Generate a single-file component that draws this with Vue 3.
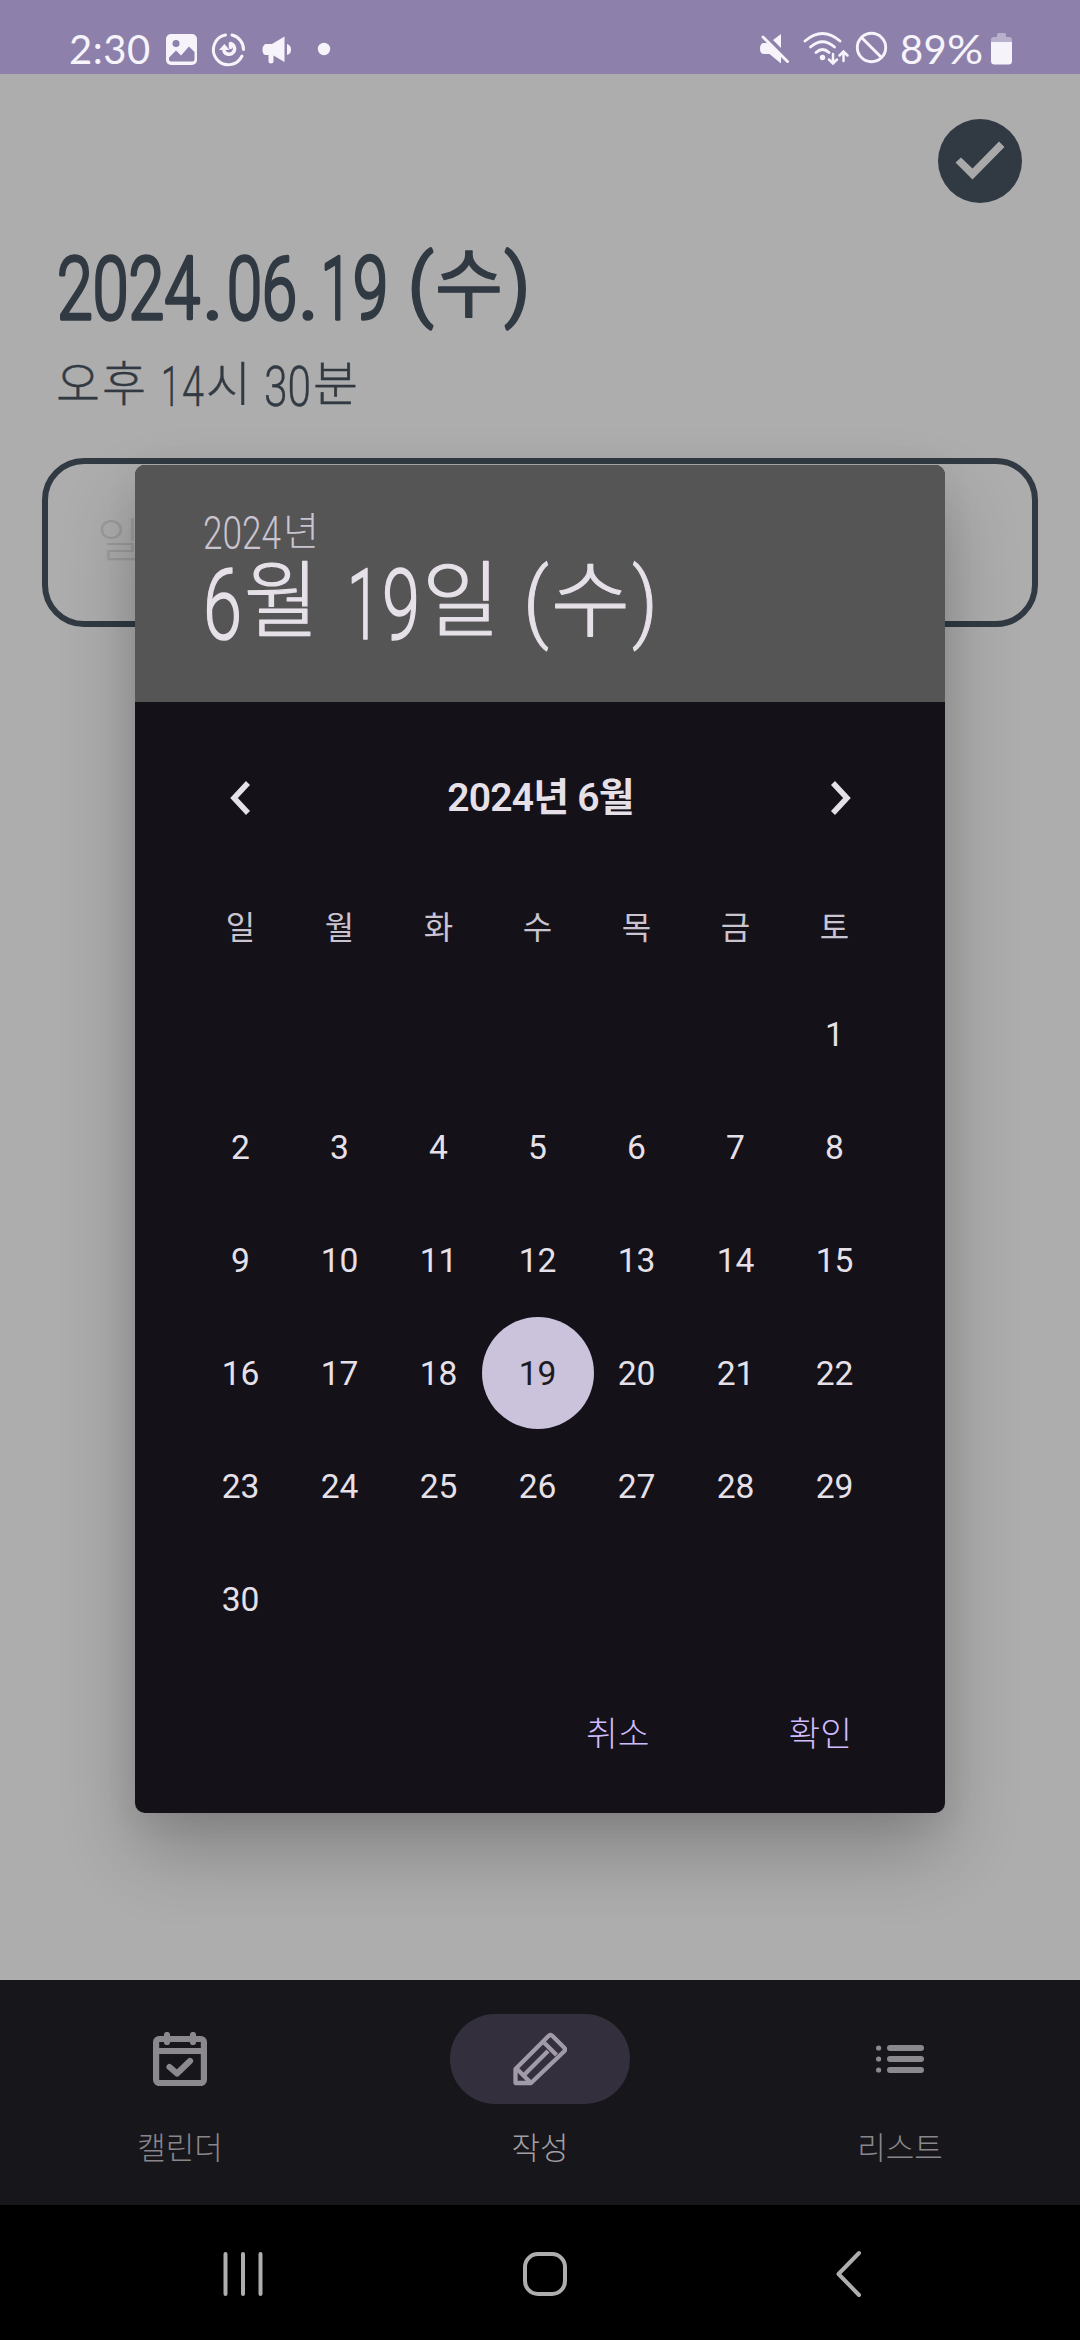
<script setup>
// Display lettering: each run is fitted to its own advance width.
const headline = [
  { t: '2024', x: 57, w: 143, k: 'd' }, { t: '.', x: 202, w: 22, k: 'd' },
  { t: '06', x: 227, w: 70, k: 'd' }, { t: '.', x: 298, w: 21, k: 'd' },
  { t: '1', x: 321, w: 30, k: 'd' }, { t: '9', x: 353, w: 35, k: 'd' },
  { t: '(', x: 408, w: 25, k: 'p' }, { t: '수', x: 435, w: 68, k: 'h' }, { t: ')', x: 505, w: 25, k: 'p' },
]
const clock = [
  { t: '오', x: 56, w: 44, k: 'h' }, { t: '후', x: 102, w: 44, k: 'h' },
  { t: '1', x: 161, w: 19, k: 'd' }, { t: '4', x: 182, w: 22, k: 'd' }, { t: '시', x: 206, w: 45, k: 'h' },
  { t: '30', x: 264, w: 47, k: 'd' }, { t: '분', x: 313, w: 45, k: 'h' },
]
const year = [
  { t: '2024', x: 68, w: 78, k: 'd' }, { t: '년', x: 148, w: 36, k: 'h' },
]
const picked = [
  { t: '6', x: 68, w: 39, k: 'd' }, { t: '월', x: 109, w: 75, k: 'h' },
  { t: '1', x: 212, w: 33, k: 'd' }, { t: '9', x: 247, w: 38, k: 'd' }, { t: '일', x: 287, w: 78, k: 'h' },
  { t: '(', x: 388, w: 26, k: 'p' }, { t: '수', x: 416, w: 79, k: 'h' }, { t: ')', x: 497, w: 26, k: 'p' },
]
const weekdays = ['일', '월', '화', '수', '목', '금', '토']
const cells = [...Array(6).fill(''), ...Array.from({ length: 30 }, (_, i) => i + 1)]
</script>

<template>
  <div class="screen">
    <header class="status">
      <span class="time">2:30</span>
      <svg class="left-icons" width="180" height="74" viewBox="160 0 180 74">
        <rect x="166" y="34" width="31" height="31" rx="5" fill="#f6f4fa" />
        <circle cx="176" cy="43.500" r="3.500" fill="#8d80ab" />
        <path d="M169 57.500l7-7 5 5 8-9 5.500 5.500v7.500q0 2-2 2h-21.500q-2 0-2-2z" fill="#8d80ab" />
        <g fill="none" stroke="#f6f4fa" stroke-width="3" stroke-linecap="round">
          <path d="M225.500 35a15 15 0 1 0 16.500 21" />
          <path d="M232 35a15 15 0 0 1 11.500 14.500" />
          <path d="M230.500 43.500a5.500 5.500 0 1 1-6.500 7.500M230.500 43.500v4" stroke-width="3.500" />
        </g>
        <path d="M219 50l5.500-6 5 6z" fill="#f6f4fa" />
        <path d="M265 44h7l12.500-7.500v25.500l-11-6.500v6q0 2-2.500 2t-2.500-2v-6.500h-3.500q-2.500-1-2.500-5t2.500-6zM287 44q4 1 4 5.500t-4 5.500z" fill="#f6f4fa" />
        <circle cx="324" cy="49" r="6.200" fill="#f6f4fa" />
      </svg>
      <svg class="right-icons" width="140" height="74" viewBox="755 0 140 74">
        <g fill="#f6f4fa">
          <path d="M773 40l8-6v14zM763 43h4.500l13.500 13v7.500l-11.500-9.500h-6.500q-3-1-3-5.500t3-5.500z" />
          <circle cx="822.500" cy="57.500" r="2.700" />
        </g>
        <g fill="none" stroke="#f6f4fa" stroke-width="2.900" stroke-linecap="round">
          <path d="M763 37l24.500 24.500" />
          <path d="M805 41q17.500-15 35 0M810.500 47q12-10.500 24 0M816 52.500q6.500-6 13 0" />
          <path d="M833 54v9M829 59.500l4 4 4-4M843.500 61v-9.500M839.500 55.500l4-4 4 4" stroke-width="2.500" />
          <circle cx="871.500" cy="47.500" r="14.200" />
          <path d="M861.500 37.500l20 20" />
        </g>
      </svg>
      <span class="percent">89<i>%</i></span>
      <svg class="battery" width="21" height="32" viewBox="0 0 21 32">
        <path d="M0 9V7q0-3 3-3h3V2q0-2 2-2h5q2 0 2 2v2h3q3 0 3 3v2z" fill="#b9b0cd" />
        <path d="M0 9h21v19q0 3.500-3.500 3.500h-14Q0 31.500 0 28z" fill="#f6f4fa" />
      </svg>
    </header>

    <main class="content">
      <div class="toolbar">
        <svg width="84" height="84" viewBox="0 0 84 84">
          <circle cx="42" cy="42" r="42" fill="#313a42" />
          <path d="M17.500 43.500l5.500-5 11.500 11L61 22.500l5.500 5.500-32 32.500z" fill="#a9a9a9" />
        </svg>
      </div>
      <svg class="lettering headline" width="600" height="110" viewBox="0 236 600 110">
        <text><tspan v-for="(r, i) in headline" :key="i" :x="r.x" :y="r.k === 'd' ? 319 : r.k === 'h' ? 310.500 : 311" :textLength="r.w" lengthAdjust="spacingAndGlyphs" :class="r.k">{{ r.t }}</tspan></text>
      </svg>
      <svg class="lettering clock" width="600" height="74" viewBox="0 346 600 74">
        <text><tspan v-for="(r, i) in clock" :key="i" :x="r.x" :y="r.k === 'h' ? 400.500 : 406" :textLength="r.w" lengthAdjust="spacingAndGlyphs" :class="r.k">{{ r.t }}</tspan></text>
      </svg>
      <div class="field"><span>일</span></div>
    </main>

    <nav class="tabs">
      <div class="tab">
        <div class="pill">
          <svg width="54" height="54" viewBox="0 0 54 54" fill="none" stroke="#8b888e" stroke-width="6.200">
            <rect x="3.100" y="7" width="47.800" height="44" rx="3" />
            <path d="M3 19h48" />
            <path d="M14 3v7M40 3v7M16.500 35l7.500 6.500L37 29" stroke-linecap="round" stroke-linejoin="round" />
          </svg>
        </div>
        <span>캘린더</span>
      </div>
      <div class="tab">
        <div class="pill active">
          <svg width="54" height="54" viewBox="0 0 54 54" fill="none" stroke="#a19aa8" stroke-width="4.300" stroke-linejoin="round">
            <path d="M2.500 51V37L35.500 4q2-2 4 0L51 15.500q2 2 0 4L18 51z" />
            <path d="M31 10.500L43.500 23M4 37l14 14M12 42l23-23" />
          </svg>
        </div>
        <span class="on">작성</span>
      </div>
      <div class="tab">
        <div class="pill">
          <svg width="48" height="30" viewBox="0 0 48 30" stroke="#8b888e" stroke-width="6" stroke-linecap="round">
            <path d="M14 4h31M14 15h31M14 26h31" />
            <path d="M2.600 4h.01M2.600 15h.01M2.600 26h.01" stroke-width="5.200" />
          </svg>
        </div>
        <span>리스트</span>
      </div>
    </nav>

    <footer class="system">
      <svg width="44" height="48" viewBox="0 0 44 48"><path d="M4.500 4v40M22 4v40M39.500 4v40" /></svg>
      <svg class="home" width="48" height="48" viewBox="0 0 48 48"><rect x="4" y="4" width="40" height="40" rx="13" /></svg>
      <svg width="32" height="50" viewBox="0 0 32 50"><path d="M26 4L5.500 25 26 46" /></svg>
    </footer>

    <section class="dialog">
      <div class="dialog-head">
        <svg class="lettering" width="700" height="237" viewBox="0 0 700 237">
          <text class="year"><tspan v-for="(r, i) in year" :key="i" :x="r.x" :y="r.k === 'h' ? 79.500 : 84" :textLength="r.w" lengthAdjust="spacingAndGlyphs" :class="r.k">{{ r.t }}</tspan></text>
          <text class="picked"><tspan v-for="(r, i) in picked" :key="i" :x="r.x" :y="r.k === 'h' ? 165 : r.k === 'p' ? 165.500 : 174" :textLength="r.w" lengthAdjust="spacingAndGlyphs" :class="r.k">{{ r.t }}</tspan></text>
        </svg>
      </div>
      <div class="month">
        <svg width="22" height="36" viewBox="0 0 22 36"><path d="M19 3L5 18l14 15" /></svg>
        <span>2024년 6월</span>
        <svg width="22" height="36" viewBox="0 0 22 36"><path d="M3 3l14 15L3 33" /></svg>
      </div>
      <div class="grid weekdays"><span v-for="d in weekdays" :key="d">{{ d }}</span></div>
      <div class="grid days">
        <span v-for="(c, i) in cells" :key="i"><b :class="{ selected: c === 19 }">{{ c }}</b></span>
      </div>
      <div class="actions"><span>취소</span><span>확인</span></div>
    </section>
  </div>
</template>

<style>
body { margin: 0; }
</style>

<style scoped>
.screen {
  position: relative;
  width: 1080px;
  height: 2340px;
  display: flex;
  flex-direction: column;
  background: #adadad;
  overflow: hidden;
  font-family: Roboto, "Noto Sans CJK KR", sans-serif;
}
svg { display: block; flex: none; }

.status {
  height: 74px;
  flex: none;
  display: flex;
  background: #8d80ab;
  color: #f6f4fa;
  font-family: Lato, sans-serif;
  font-size: 40px;
  line-height: 98px;
  overflow: hidden;
}
.time { width: 91px; padding-left: 69px; white-space: nowrap; letter-spacing: .5px; }
.right-icons { margin-left: 415px; }
.percent { display: flex; width: 91px; margin-left: 5px; letter-spacing: .3px; }
.percent i { font-style: normal; transform: scaleX(1.13); transform-origin: 0 50%; }
.battery { margin-top: 33px; }

.content { flex: 1; }
.toolbar { display: flex; justify-content: flex-end; padding: 45px 58px 33px 0; }

.lettering { overflow: visible; }
.lettering text { font-family: Roboto, sans-serif; font-weight: 300; stroke-linejoin: round; stroke-linecap: round; }
.lettering .h { font-family: "Noto Sans CJK KR", sans-serif; }
.headline text { fill: #313a42; stroke: #313a42; stroke-width: 3.600px; font-size: 88px; }
.headline .h { font-size: 75px; font-weight: 400; stroke-width: 1.300px; }
.headline .p { font-size: 78px; stroke-width: 3.500px; }
.clock text { fill: #313a42; stroke: #313a42; stroke-width: .4px; font-size: 56px; }
.clock .h { font-size: 48px; }

.field {
  margin: 38px 42px 0;
  height: 169px;
  box-sizing: border-box;
  border: 6px solid #313a42;
  border-radius: 42px;
  padding: 0 0 12px 49px;
  display: flex;
  align-items: center;
  color: #9c9b9c;
  font: 300 47px "Noto Sans CJK KR", sans-serif;
}

.tabs { height: 225px; flex: none; display: flex; background: #17161b; }
.tab {
  flex: 1;
  display: flex;
  flex-direction: column;
  align-items: center;
  padding-top: 34px;
  color: #8a878c;
  font: 300 31px/84px "Noto Sans CJK KR", sans-serif;
}
.pill {
  width: 180px;
  height: 90px;
  border-radius: 45px;
  display: flex;
  align-items: center;
  justify-content: center;
}
.pill.active { background: #332f3c; }
.tab .on { color: #a19fa2; }

.system {
  height: 135px;
  flex: none;
  box-sizing: border-box;
  padding: 3px 215px 0 221px;
  display: flex;
  align-items: center;
  justify-content: space-between;
  background: #000;
}
.system svg { fill: none; stroke: #aeaeae; stroke-width: 4px; stroke-linecap: round; stroke-linejoin: round; }
.system .home { margin-right: 8px; }

.dialog {
  position: absolute;
  left: 135px;
  top: 465px;
  width: 810px;
  height: 1348px;
  border-radius: 10px;
  overflow: hidden;
  background: #141118;
  color: #e6e0e9;
  box-shadow: 0 38px 74px rgba(0, 0, 0, .24), 0 6px 34px rgba(0, 0, 0, .06);
}
.dialog-head { height: 237px; background: #555; }
.year { fill: #cac4d0; font-size: 46px; }
.year .h { font-size: 39px; }
.picked { fill: #e6e0e9; stroke: #e6e0e9; stroke-width: 1.600px; font-size: 99px; }
.picked .h { font-size: 83px; stroke-width: 1.200px; }
.picked .p { font-size: 87px; stroke-width: 1px; }

.month {
  display: flex;
  align-items: center;
  justify-content: space-between;
  height: 92px;
  padding: 50px 93px 0 94px;
  font-size: 39px;
  font-weight: 600;
}
.month span { line-height: 50px; letter-spacing: -.8px; }
.month svg { fill: none; stroke: #e6e0e9; stroke-width: 5.500px; }

.grid { display: grid; grid-template-columns: repeat(7, 99px); margin-left: 56px; text-align: center; }
.weekdays {
  margin-top: 53px;
  height: 57px;
  color: #cac4d0;
  font: 400 32px/57px "Noto Sans CJK KR", sans-serif;
}
.days { grid-auto-rows: 113px; margin-top: 23px; }
.days span { display: flex; align-items: center; justify-content: center; }
.days b {
  flex: none;
  width: 112px;
  height: 112px;
  line-height: 113px;
  border-radius: 50%;
  font-size: 33.600px;
  font-weight: 400;
}
.days b.selected { background: #cbc2db; color: #1d1b20; }

.actions {
  display: flex;
  justify-content: flex-end;
  gap: 139px;
  padding: 46px 93px 0 0;
  color: #d0bcff;
  font: 300 34.500px/60px "Noto Sans CJK KR", sans-serif;
}
</style>
